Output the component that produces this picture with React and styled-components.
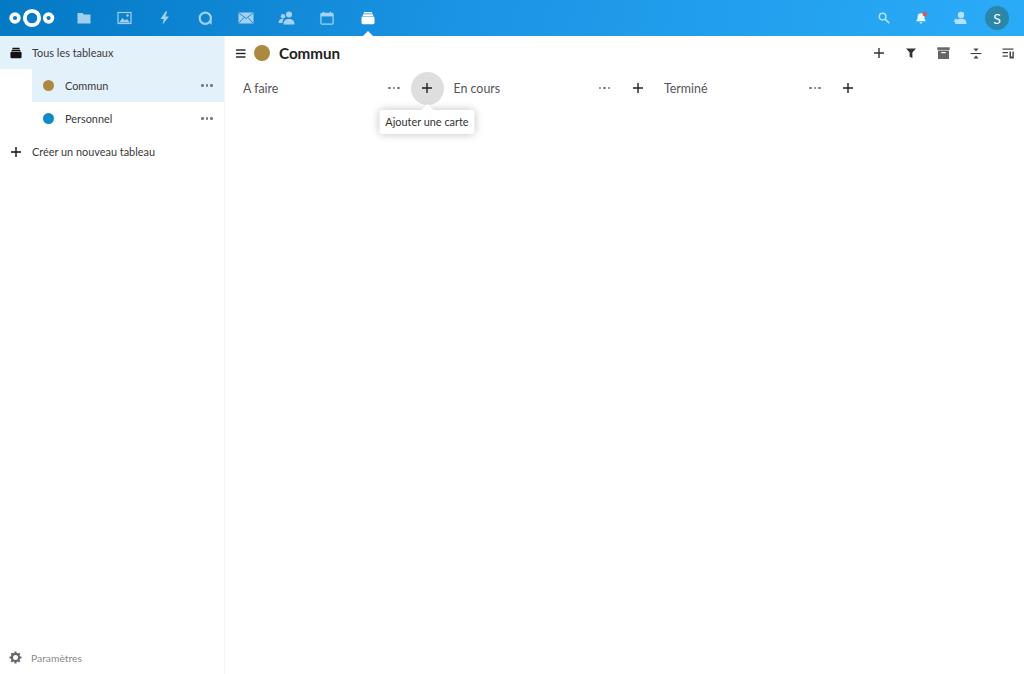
import React from "react";
import styled, { createGlobalStyle } from "styled-components";

const Global = createGlobalStyle`
  html, body { margin: 0; padding: 0; height: 100%; background: #fff; }
  #root { height: 100%; }
  * { box-sizing: border-box; }
  body { font-family: "Lato", "Noto Sans", "Liberation Sans", sans-serif; font-size: 11px; color: #222; overflow: hidden; }
`;

const Page = styled.div`
  width: 1024px; height: 674px; display: flex; flex-direction: column; overflow: hidden;
`;
const Header = styled.header`
  height: 36px; flex: none; display: flex; align-items: center;
  background: linear-gradient(100deg, #0479c4 0%, #1a94e4 45%, #2aabf8 100%);
`;
const Logo = styled.svg`
  width: 46px; height: 20px; margin-left: 8.5px; margin-right: 9px; flex: none;
`;
const AppNav = styled.nav`
  display: flex; align-items: center;
`;
const AppItem = styled.div`
  position: relative; width: 40.6px; height: 36px; display: flex; align-items: center; justify-content: center;
  opacity: ${p => (p.$active ? 1 : 0.62)};
  color: #fff;
  ${p => p.$active && `
    &::after {
      content: ""; position: absolute; left: 50%; bottom: 0; margin-left: -5px;
      border: 5px solid transparent; border-top: 0; border-bottom-color: #fff;
    }
  `}
`;
const HeaderRight = styled.div`
  margin-left: auto; display: flex; align-items: center; height: 36px; padding-right: 15px;
`;
const HeaderIcon = styled.div`
  width: 38px; height: 36px; display: flex; align-items: center; justify-content: center; color: #fff; opacity: ${p => p.$dim ? 0.65 : 0.9};
`;
const Avatar = styled.div`
  width: 24px; height: 24px; border-radius: 50%; background: #2b86aa; color: #fff; display: flex; align-items: center; justify-content: center;
  font-size: 14px; margin-left: 6px;
`;
const Body = styled.div`
  flex: 1; display: flex; min-height: 0;
`;
const Sidebar = styled.aside`
  width: 225px; flex: none; border-right: 1px solid #f4f4f4; display: flex; flex-direction: column;
`;
const NavRow = styled.div`
  height: 33px; display: flex; align-items: center; position: relative;
  margin-left: ${p => (p.$nested ? "32px" : "0")};
  background: ${p => (p.$selected ? "#e3f1fb" : "transparent")};
  color: #3a3a3a; font-size: 10.9px;
`;
const NavIcon = styled.div`
  width: 32px; flex: none; display: flex; align-items: center; justify-content: center; color: #111;
`;
const Dot = styled.span`
  width: ${p => p.$size || 11}px; height: ${p => p.$size || 11}px; border-radius: 50%; background: ${p => p.$color}; flex: none; display: block;
`;
const DotSlot = styled.div`
  width: 33px; flex: none; display: flex; align-items: center; justify-content: center;
`;
const More = styled.div`
  display: flex; align-items: center; gap: 2px;
  ${p => p.$push && `margin-left: auto; margin-right: 11px;`}
  & > i { width: 2.6px; height: 2.6px; border-radius: 50%; background: #777; display: block; }
`;
const Settings = styled.div`
  margin-top: auto; height: 33px; display: flex; align-items: center; color: #8a8a8a; font-size: 10.3px;
`;
const SettingsIcon = styled.div`
  width: 31px; flex: none; display: flex; justify-content: center; color: #666;
`;
const Main = styled.main`
  flex: 1; min-width: 0; display: flex; flex-direction: column;
`;
const Toolbar = styled.div`
  height: 34px; flex: none; display: flex; align-items: center; padding-left: 11px;
`;
const Title = styled.h1`
  margin: 0 0 0 9px; font-size: 15.2px; font-weight: 700; color: #222; position: relative; top: -0.5px;
`;
const Burger = styled.div`
  margin-right: 8px; display: flex;
`;
const Actions = styled.div`
  margin-left: auto; display: flex; align-items: center; color: #555;
`;
const ActionBtn = styled.div`
  width: 32.25px; height: 34px; display: flex; align-items: center; justify-content: center; color: ${p => p.$dark ? "#333" : "#555"};
`;
const Board = styled.div`
  display: flex; padding-left: 18px;
`;
const Stack = styled.section`
  width: 210.5px; flex: none; height: 36px; display: flex; align-items: center; position: relative;
`;
const StackTitle = styled.div`
  font-size: 12.4px; color: #555; flex: 1;
`;
const StackMore = styled.div`
  width: 33px; display: flex; justify-content: center;
`;
const AddBtn = styled.div`
  width: 33px; height: 33px; border-radius: 50%; display: flex; align-items: center; justify-content: center; flex: none; color: #222; position: relative;
  margin-right: 10px;
  background: ${p => (p.$hover ? "#dedede" : "transparent")};
`;
const Tooltip = styled.div`
  position: absolute; top: 38px; left: 50%; transform: translateX(-50%); background: #fff; color: #333; white-space: nowrap;
  font-size: 10.9px; width: 95px; text-align: center; height: 24px; line-height: 24px; border-radius: 3px; box-shadow: 0 0 8px rgba(0,0,0,.25);
  &::before {
    content: ""; position: absolute; left: 50%; top: -6px; margin-left: -6px;
    border-left: 6px solid transparent; border-right: 6px solid transparent; border-bottom: 6px solid #fff;
  }
`;

const Plus = ({ s = 10 }) => (
  <svg width={s} height={s} viewBox="0 0 10 10"><path d="M5 0v10M0 5h10" stroke="currentColor" strokeWidth="1.4" fill="none" /></svg>
);
const Dots = ({ push }) => <More $push={push}><i /><i /><i /></More>;
const DeckIcon = ({ s = 14, color = "currentColor" }) => (
  <svg width={s} height={s} viewBox="0 0 14 14" fill={color}>
    <path d="M3.2 1h7.6l.8 1.6H2.4z" /><path d="M2.2 3.3h9.6l.6 1.6H1.6z" />
    <rect x="0.5" y="5.6" width="13" height="7.6" rx="1.4" />
  </svg>
);
const I = {
  files: <svg width="14" height="14" viewBox="0 0 14 14" fill="currentColor"><path d="M0.5 2h5l1.5 1.6h6.5V12.5H0.5z" /></svg>,
  photos: <svg width="15" height="14" viewBox="0 0 15 14" fill="none"><rect x="1" y="1.5" width="13" height="11" stroke="currentColor" strokeWidth="1.2" /><path d="M2 11.5l3.5-4.5 2.5 2.5 2-1.5 3 3.5z" fill="currentColor" /><circle cx="10.5" cy="4.5" r="1.3" fill="currentColor" /></svg>,
  activity: <svg width="10" height="14" viewBox="0 0 10 14" fill="currentColor"><path d="M5.5 0.5L0.5 8h3.2l-1 5.5L9 5.5H5.4l1.8-5z" /></svg>,
  talk: <svg width="15" height="15" viewBox="0 0 15 15" fill="none"><circle cx="7.3" cy="7.3" r="5.6" stroke="currentColor" strokeWidth="2.2" /><path d="M10.5 11l3.3 3-.2-4.5z" fill="currentColor" /></svg>,
  mail: <svg width="16" height="12" viewBox="0 0 16 12" fill="none"><rect x="0.5" y="0.5" width="15" height="11" fill="currentColor" /><path d="M1 1l7 5.5L15 1M1 11l5-5.5M15 11l-5-5.5" stroke="#2090d8" strokeWidth="1" /></svg>,
  contacts: <svg width="17" height="14" viewBox="0 0 17 14" fill="currentColor"><circle cx="11" cy="3.4" r="3" /><path d="M5.5 13.5c0-3.4 1.5-5.5 5.5-5.5s5.5 2.1 5.5 5.5z" /><circle cx="5" cy="5.2" r="2.2" /><path d="M0.5 12c0-2.8 1.5-4.3 4.5-4.3l0.8.1c-1 1.2-1.3 2.6-1.3 4.2z" /></svg>,
  calendar: <svg width="14" height="14" viewBox="0 0 14 14" fill="none"><rect x="0.9" y="2.4" width="12.2" height="10.7" rx="1" stroke="currentColor" strokeWidth="1.2" /><rect x="0.9" y="2.4" width="12.2" height="3" fill="currentColor" /><path d="M3.5 0.8v2.5M10.5 0.8v2.5" stroke="currentColor" strokeWidth="1.4" /></svg>,
  search: <svg width="12" height="12" viewBox="0 0 12 12" fill="none" stroke="currentColor"><circle cx="4.6" cy="4.6" r="3.3" strokeWidth="1.5" /><path d="M7.2 7.2l4 4" strokeWidth="1.8" /></svg>,
  bell: <svg width="14" height="14" viewBox="0 0 14 14"><path fill="#fff" d="M6 2.2a3.4 3.4 0 0 1 3.4 3.4c0 2.6.6 3.6 1.6 4.6H1c1-1 1.6-2 1.6-4.6A3.4 3.4 0 0 1 6 2.2zM4.6 11.2h2.8a1.4 1.4 0 0 1-2.8 0z" /><circle cx="9.8" cy="3" r="2.3" fill="#e8533f" /></svg>,
  user: <svg width="14" height="14" viewBox="0 0 14 14" fill="currentColor"><circle cx="8" cy="4" r="3.2" /><path d="M2 13c0-3.5 2-5.2 6-5.2s5.5 1.7 5.5 5.2z" /><path d="M1 11c0-2 1-3.2 3-3.4L3 11z" /></svg>,
  burger: <svg width="10" height="9" viewBox="0 0 10 9" fill="#222"><rect width="9.5" height="1.4" y="0.3" /><rect width="9.5" height="1.4" y="3.8" /><rect width="9.5" height="1.4" y="7.3" /></svg>,
  filter: <svg width="10" height="10" viewBox="0 0 10 10" fill="currentColor"><path d="M0 0.5h10L6.4 4.6V10L3.6 8.8V4.6z" /></svg>,
  archive: <svg width="13" height="12" viewBox="0 0 13 12" fill="#666"><rect x="0.3" y="0.3" width="12.4" height="2.6" /><path d="M1 3.6h11V12H1zM4.3 5v1.3h4.4V5z" fillRule="evenodd" /></svg>,
  collapse: <svg width="12" height="11" viewBox="0 0 12 11" fill="#444"><rect x="0.5" y="5" width="11" height="1.1" /><path d="M3.5 0.6h5L6 3.6zM3.5 10.6h5L6 7.5z" /></svg>,
  details: <svg width="12" height="11" viewBox="0 0 12 11" fill="#444"><rect x="0.5" y="0.5" width="11" height="1.2" /><rect x="0.5" y="4" width="5.5" height="1.2" /><rect x="0.5" y="7.5" width="5.5" height="1.2" /><path d="M7.5 3.4h1.5v5.2h1.4V3.4h1.4v7.2H7.5z" /></svg>,
  gear: <svg width="13" height="13" viewBox="0 0 13 13" fill="none"><circle cx="6.5" cy="6.5" r="3.6" stroke="currentColor" strokeWidth="2.2" /><path d="M6.5 0.5v2M6.5 10.5v2M0.5 6.5h2M10.5 6.5h2M2.3 2.3l1.4 1.4M9.3 9.3l1.4 1.4M2.3 10.7l1.4-1.4M9.3 3.7l1.4-1.4" stroke="currentColor" strokeWidth="2" /></svg>,
};

const columns = [
  { name: "A faire", hover: true },
  { name: "En cours" },
  { name: "Terminé" },
];

export default function App() {
  return (
    <Page>
      <Global />
      <Header>
        <Logo viewBox="0 0 46 20" fill="none" stroke="#fff">
          <circle cx="23" cy="10" r="7.2" strokeWidth="3.8" />
          <circle cx="6" cy="10" r="3.9" strokeWidth="3.6" />
          <circle cx="39.6" cy="10" r="3.9" strokeWidth="3.6" />
        </Logo>
        <AppNav>
          <AppItem>{I.files}</AppItem>
          <AppItem>{I.photos}</AppItem>
          <AppItem>{I.activity}</AppItem>
          <AppItem>{I.talk}</AppItem>
          <AppItem>{I.mail}</AppItem>
          <AppItem>{I.contacts}</AppItem>
          <AppItem>{I.calendar}</AppItem>
          <AppItem $active><DeckIcon /></AppItem>
        </AppNav>
        <HeaderRight>
          <HeaderIcon $dim>{I.search}</HeaderIcon>
          <HeaderIcon>{I.bell}</HeaderIcon>
          <HeaderIcon $dim>{I.user}</HeaderIcon>
          <Avatar>S</Avatar>
        </HeaderRight>
      </Header>
      <Body>
        <Sidebar>
          <NavRow $selected>
            <NavIcon><DeckIcon s={12} color="#111" /></NavIcon>
            Tous les tableaux
          </NavRow>
          <NavRow $nested $selected>
            <DotSlot><Dot $color="#ab8a3f" /></DotSlot>
            Commun
            <Dots push />
          </NavRow>
          <NavRow $nested>
            <DotSlot><Dot $color="#0b8bc9" /></DotSlot>
            Personnel
            <Dots push />
          </NavRow>
          <NavRow>
            <NavIcon><Plus /></NavIcon>
            Créer un nouveau tableau
          </NavRow>
          <Settings>
            <SettingsIcon>{I.gear}</SettingsIcon>
            Paramètres
          </Settings>
        </Sidebar>
        <Main>
          <Toolbar>
            <Burger>{I.burger}</Burger>
            <Dot $color="#ab8a3f" $size={16} />
            <Title>Commun</Title>
            <Actions>
              <ActionBtn $dark><Plus /></ActionBtn>
              <ActionBtn $dark>{I.filter}</ActionBtn>
              <ActionBtn>{I.archive}</ActionBtn>
              <ActionBtn>{I.collapse}</ActionBtn>
              <ActionBtn>{I.details}</ActionBtn>
            </Actions>
          </Toolbar>
          <Board>
            {columns.map(c => (
              <Stack key={c.name}>
                <StackTitle>{c.name}</StackTitle>
                <StackMore><Dots /></StackMore>
                <AddBtn $hover={c.hover}>
                  <Plus />
                  {c.hover && <Tooltip>Ajouter une carte</Tooltip>}
                </AddBtn>
              </Stack>
            ))}
          </Board>
        </Main>
      </Body>
    </Page>
  );
}
